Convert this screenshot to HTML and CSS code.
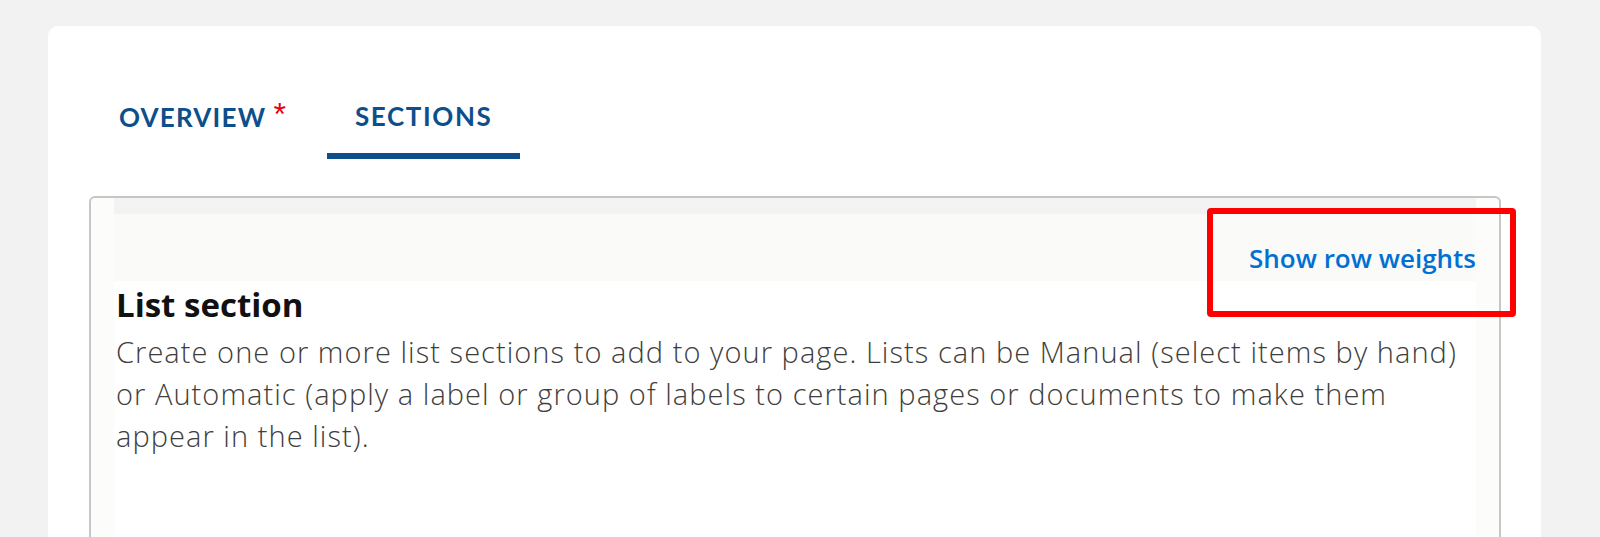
FILE: index.html
```html
<!DOCTYPE html>
<html lang="en">
<head>
<meta charset="utf-8">
<title>Sections</title>
<link rel="stylesheet" href="styles.css">
</head>
<body>
<div class="page">
  <div class="card">
    <nav class="tabs">
      <div class="tab">OVERVIEW <span class="req">*</span></div>
      <div class="tab active">SECTIONS</div>
    </nav>
    <div class="box">
      <div class="strip"></div>
      <div class="box-head">
        <a class="row-weights" href="#">Show row weights</a>
      </div>
      <div class="section">
        <h2 class="section-title">List section</h2>
        <p class="section-desc">Create one or more list sections to add to your page. Lists can be Manual (select items by hand) or Automatic (apply a label or group of labels to certain pages or documents to make them appear in the list).</p>
      </div>
    </div>
  </div>
  <div class="highlight"></div>
</div>
</body>
</html>
```
FILE: styles.css
```css
html, body {
  margin: 0;
  padding: 0;
  background: #f2f2f2;
  height: 100%;
  overflow: hidden;
}
.page {
  position: relative;
  padding: 26px 59px 0 48px;
}
.card {
  background: #ffffff;
  border-radius: 10px;
  padding: 61px 40px 0 41px;
  height: 600px;
}
.tabs {
  display: flex;
  gap: 11px;
  font-family: "Lato", "Open Sans", sans-serif;
  font-weight: 700;
  font-size: 26px;
  letter-spacing: 1.2px;
  color: #0d4f8b;
}
.tab {
  padding: 14px 30px 21px 30px;
  line-height: 30px;
  border-bottom: 6px solid transparent;
}
.tab.active {
  padding-left: 28px;
  padding-right: 28px;
  letter-spacing: 1.6px;
  border-bottom-color: #0d4f8b;
}
.req {
  color: #e8000b;
  font-family: "Liberation Sans", sans-serif;
  font-weight: 400;
  font-size: 32px;
  position: relative;
  top: -2px;
  letter-spacing: 0;
}
.box {
  margin-top: 37px;
  border: 2px solid #c6c6c6;
  border-bottom: none;
  border-radius: 6px 6px 0 0;
  background: #fcfcfb;
  padding: 0 23px 0 23px;
  height: 400px;
}
.strip {
  height: 16px;
  background: #f3f3f3;
}
.box-head {
  background: #fafaf9;
  height: 67px;
  display: flex;
  justify-content: flex-end;
  align-items: flex-start;
}
.row-weights {
  font-family: "Open Sans", sans-serif;
  font-weight: 600;
  font-size: 26px;
  color: #0070d2;
  text-decoration: none;
  margin-top: 26px;
  line-height: 36px;
}
.section {
  background: #ffffff;
  border-radius: 5px 5px 0 0;
  padding: 2px 0 0 2px;
  height: 300px;
}
.section-title {
  margin: 0;
  font-family: "Open Sans", sans-serif;
  font-weight: 700;
  font-size: 33px;
  line-height: 44px;
  color: #111111;
}
.section-desc {
  margin: 4px 0 0 0;
  max-width: 1350px;
  font-family: "Open Sans", sans-serif;
  font-weight: 300;
  font-size: 29px;
  letter-spacing: 1.05px;
  line-height: 42px;
  color: #3e3e3c;
}
.highlight {
  position: absolute;
  left: 1207px;
  top: 208px;
  width: 297px;
  height: 97px;
  border: 6px solid #ff0000;
  border-radius: 4px;
}
```
